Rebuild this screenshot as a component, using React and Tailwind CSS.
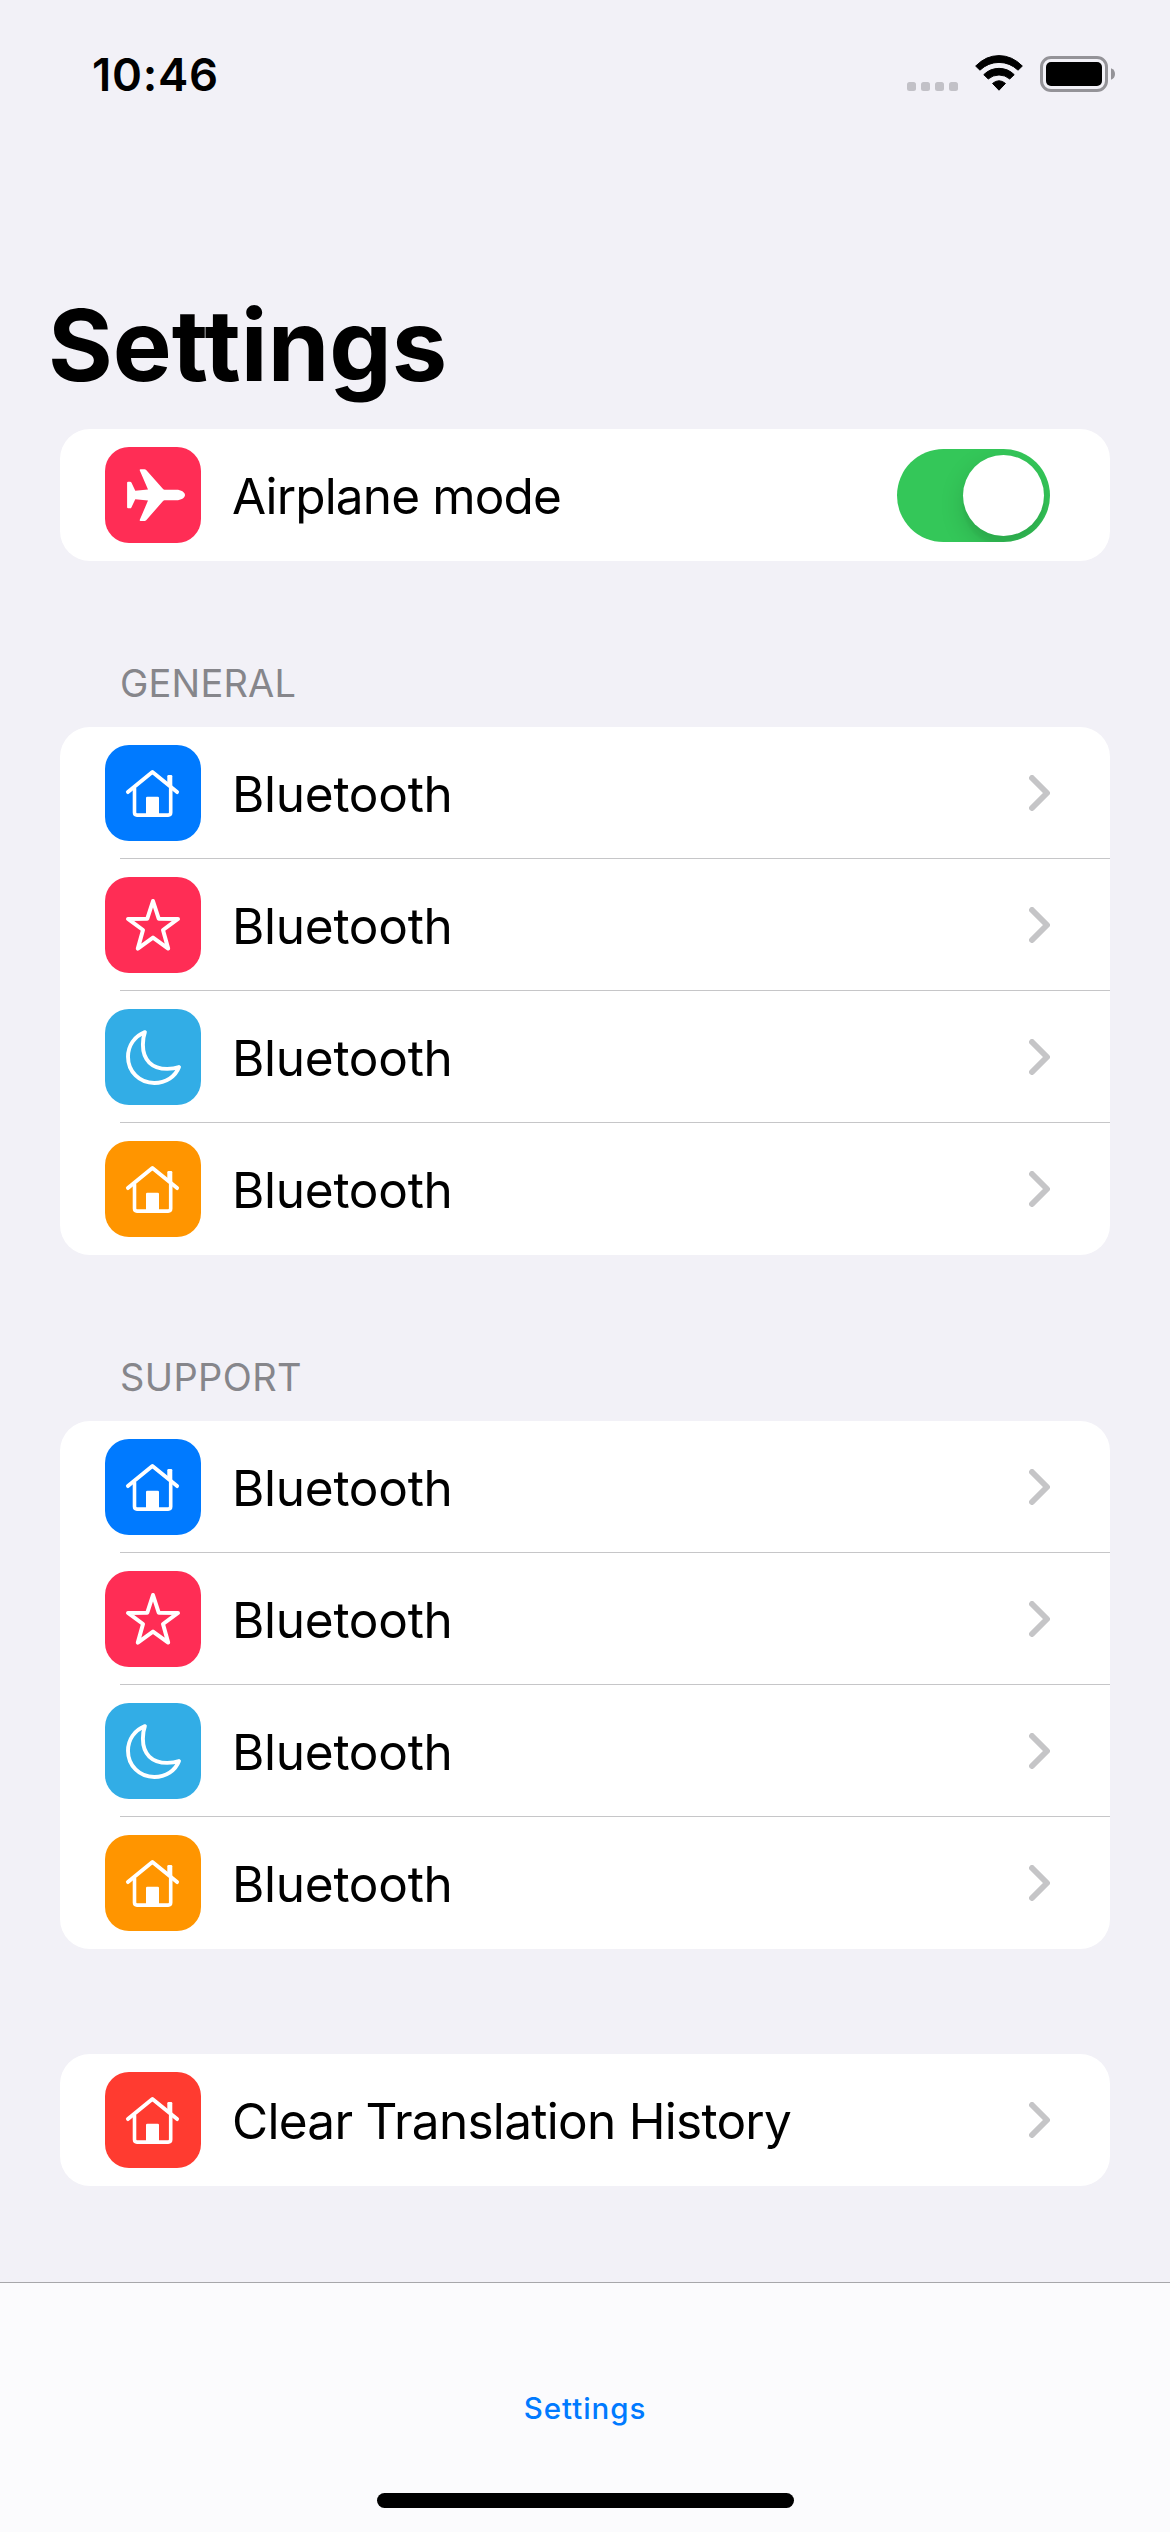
function HouseIcon() {
  return (
    <svg viewBox="0 0 96 96" className="size-full" fill="none" stroke="#fff" strokeWidth="3.9" strokeLinecap="round" strokeLinejoin="round">
      <path d="M22.9 47.1 L47.4 27 L72.1 47.1" />
      <path d="M29.5 43.5 V67.6 Q29.5 70.1 32 70.1 H63.2 Q65.7 70.1 65.7 67.6 V43.5" strokeWidth="3.6" />
      <path d="M62.3 37.5 V31.2 Q62.3 30 63.5 30 H66.1 Q67.3 30 67.3 31.2 V43 Z" fill="#fff" stroke="none" />
      <path d="M41 71 V53 Q41 51.7 42.3 51.7 H52.7 Q54 51.7 54 53 V71 Z" fill="#fff" stroke="none" />
    </svg>
  );
}

function StarIcon() {
  return (
    <svg viewBox="0 0 96 96" className="size-full" fill="none" stroke="#fff" strokeWidth="4" strokeLinejoin="round">
      <path d="M48 24 L53.7 41.7 L73 41.9 L58 53 L63.2 71.6 L48 60.6 L32.8 71.6 L38 53 L23 41.9 L42.3 41.7 Z" />
    </svg>
  );
}

function MoonIcon() {
  return (
    <svg viewBox="0 0 96 96" className="size-full" fill="none" stroke="#fff" strokeWidth="3.9" strokeLinejoin="round">
      <path d="M39.9 23.1 C29.5 27.2 23 36.5 23 47.8 C23 62.7 34.4 74 49.3 74 C60.8 74 70.4 67.6 74 58 C70.3 59.4 66.5 59.9 62.2 59.9 C46.8 59.9 37.9 51 37.9 35.8 C37.9 30.9 38.4 27.2 39.9 23.1 Z" />
    </svg>
  );
}

function PlaneIcon() {
  return (
    <svg viewBox="0 0 96 96" className="size-full" fill="#fff">
      <path d="M80 48 C80 45.2 76 42.7 71.4 42.7 H60.5 C59 42.7 58.4 42.4 57.4 41.2 L41.2 23.1 Q40.5 22.3 39.5 22.3 H35.6 Q34.3 22.3 34.8 23.5 L43 42.4 L30.3 43.8 L26.4 35.6 Q26 34.7 25 34.7 H23.1 Q22.1 34.7 22.1 35.7 V60.3 Q22.1 61.3 23.1 61.3 H25 Q26 61.3 26.4 60.4 L30.3 52.2 L43 53.6 L34.8 72.8 Q34.3 74 35.6 74 H39.5 Q40.5 74 41.2 73.2 L57.4 54.8 C58.4 53.6 59 53.3 60.5 53.3 H71.4 C76 53.3 80 50.8 80 48 Z" />
    </svg>
  );
}

function Chevron() {
  return (
    <svg viewBox="0 0 21 36" className="h-[36px] w-[21px]" fill="none" stroke="#c5c5c7" strokeWidth="5.9" strokeLinecap="round" strokeLinejoin="round">
      <path d="M3 3 L18 18 L3 33" />
    </svg>
  );
}

function Toggle() {
  return (
    <div className="flex h-[93px] w-[153px] items-center justify-end overflow-hidden rounded-full bg-[#34c759] pr-1.5">
      <div className="size-[81px] rounded-full bg-white shadow-[0_9px_24px_rgba(0,0,0,0.15),0_9px_3px_rgba(0,0,0,0.04)]" />
    </div>
  );
}

function Row({ icon, color, label, tracking, divider, children }) {
  return (
    <div className="relative flex h-[132px] items-center pr-[60px] pl-[45px]">
      <div className={`size-24 shrink-0 rounded-[24px] ${color}`}>{icon}</div>
      <span className={`ml-[31px] flex-1 pt-0.5 text-[49.5px] leading-[60px] whitespace-nowrap ${tracking}`}>{label}</span>
      {children || <Chevron />}
      {divider && <div className="absolute right-0 bottom-0 left-[60px] h-px bg-[#c6c6c8]" />}
    </div>
  );
}

function Card({ children, className = "" }) {
  return <section className={`mx-[60px] overflow-hidden rounded-[30px] bg-white ${className}`}>{children}</section>;
}

const items = [
  { icon: <HouseIcon />, color: "bg-[#007aff]" },
  { icon: <StarIcon />, color: "bg-[#ff2d55]" },
  { icon: <MoonIcon />, color: "bg-[#32ade6]" },
  { icon: <HouseIcon />, color: "bg-[#ff9500]" },
];

function Group({ title, tracking }) {
  return (
    <div className="mt-[98px]">
      <h2 className={`ml-[120px] text-[38px] leading-[48px] text-[#86868b] ${tracking}`}>{title}</h2>
      <Card className="mt-5">
        {items.map((item, i) => (
          <Row key={i} icon={item.icon} color={item.color} label="Bluetooth" tracking="tracking-[-0.27px]" divider={i < items.length - 1} />
        ))}
      </Card>
    </div>
  );
}

function StatusBar() {
  return (
    <header className="flex h-[150px] items-start justify-between pt-12 pr-[55px] pl-[92px]">
      <span className="text-[45.5px] leading-[54px] font-semibold tracking-[0.75px]">10:46</span>
      <div className="flex items-start pt-[7px]">
        <div className="mt-[27px] flex gap-[5px]">
          {[0, 1, 2, 3].map((i) => (
            <div key={i} className="size-[9px] rounded-[2.5px] bg-[#c2c1c7]" />
          ))}
        </div>
        <svg viewBox="285 45 145 108" className="ml-[17px] h-[36px] w-[48px]" stroke="#000" strokeWidth="3" strokeLinejoin="round">
          <path d="M287 78 Q318 46.500 357.500 46.500 Q397 46.500 428 78 L415 90.500 Q390 67 357.500 67 Q325 67 300 90.500 Z" />
          <path d="M311.500 104 Q331 85 357.500 85 Q384 85 403.500 104 L390 117 Q376 105 357.500 105 Q339 105 325 117 Z" />
          <path d="M338 130.500 Q347 122.500 357.500 122.500 Q368 122.500 377 130.500 L357.500 151 Z" />
        </svg>
        <svg viewBox="0 0 75 36" className="mt-px ml-[17px] h-[36px] w-[75px]">
          <rect x="1.5" y="1.500" width="65" height="33" rx="9.500" fill="none" stroke="#949398" strokeWidth="3" />
          <rect x="6" y="6" width="56" height="24" rx="5" />
          <path d="M71 12.300 C73.800 13.200 75 15.500 75 18 C75 20.500 73.800 22.800 71 23.700 Z" fill="#949398" />
        </svg>
      </div>
    </header>
  );
}

export default function App() {
  return (
    <div className="flex h-[2532px] w-[1170px] flex-col overflow-hidden bg-[#f2f1f7] font-['Inter',sans-serif] text-black">
      <StatusBar />
      <h1 className="mt-[135px] ml-12 text-[99px] leading-[120px] font-bold">Settings</h1>
      <Card className="mt-6">
        <Row icon={<PlaneIcon />} color="bg-[#ff2d55]" label="Airplane mode" tracking="tracking-[-0.86px]">
          <Toggle />
        </Row>
      </Card>
      <Group title="GENERAL" tracking="tracking-[0.2px]" />
      <Group title="SUPPORT" tracking="tracking-[0.38px]" />
      <Card className="mt-[105px]">
        <Row icon={<HouseIcon />} color="bg-[#ff3b30]" label="Clear Translation History" tracking="tracking-[-0.72px]" />
      </Card>
      <nav className="mt-auto flex h-[250px] flex-col items-center justify-between border-t border-[#a7a7aa] bg-[#fbfbfd] pt-[107px] pb-6">
        <span className="text-[29.5px] leading-9 font-medium tracking-[0.95px] text-[#007aff]">Settings</span>
        <div className="h-[15px] w-[417px] rounded-full bg-black" />
      </nav>
    </div>
  );
}
